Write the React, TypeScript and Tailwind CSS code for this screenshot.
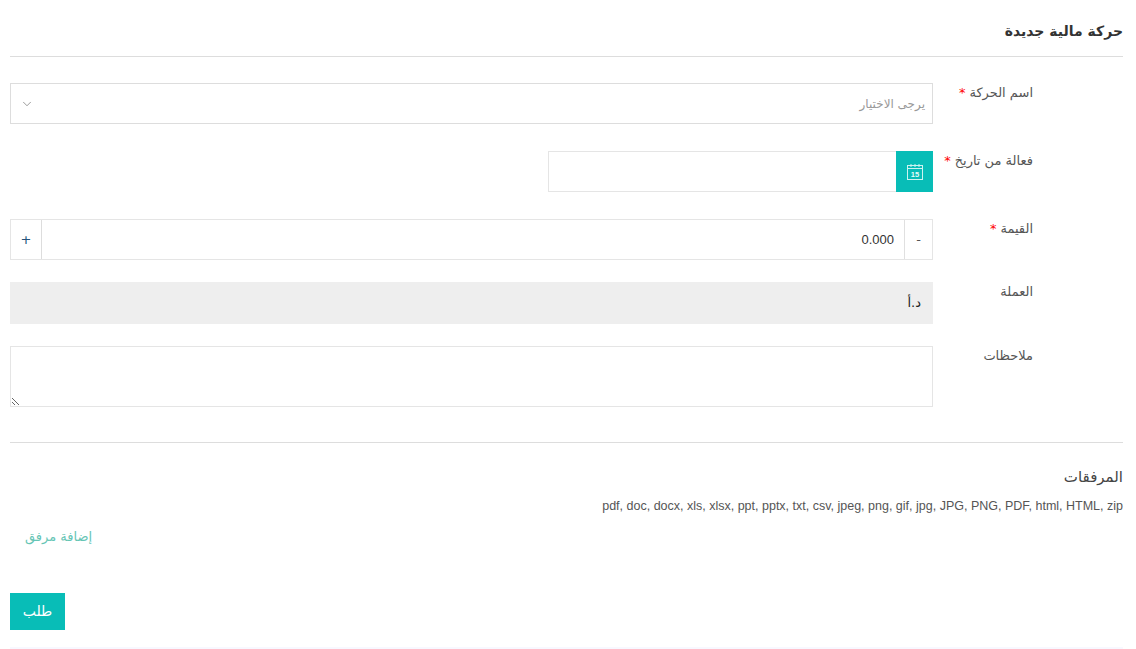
import { ChevronDown } from "lucide-react";

const arabicFont = "[font-family:'DejaVu_Sans','Noto_Sans',sans-serif]";

const labelCls = "w-[190px] shrink-0 text-left text-[13px] leading-5 text-[#555]";
const labelWrap = "flex w-[190px] shrink-0 justify-start pr-[0px]";

function Label({ text, required }: { text: string; required?: boolean }) {
  return (
    <div className={labelWrap}>
      <div className={`${labelCls} pr-[90px]`}>
        <span dir="rtl" className="block w-fit">
          {text}
          {required && <span className="mr-1 text-[#f00]">*</span>}
        </span>
      </div>
    </div>
  );
}

function CalendarIcon() {
  return (
    <svg width="16" height="16" viewBox="0 0 16 16" fill="none" stroke="#cdf3f0" strokeWidth="1">
      <rect x="0.5" y="1.5" width="15" height="14" />
      <line x1="0.5" y1="4.5" x2="15.5" y2="4.5" />
      <line x1="4" y1="0" x2="4" y2="3" />
      <line x1="8" y1="0" x2="8" y2="3" />
      <line x1="12" y1="0" x2="12" y2="3" />
      <text x="8" y="13" textAnchor="middle" fontSize="7.5" fontWeight="700" fill="#e6fbf9" stroke="none" fontFamily="Liberation Sans">
        15
      </text>
    </svg>
  );
}

export default function App() {
  return (
    <div dir="rtl" className={`h-[649px] w-[1136px] overflow-hidden bg-white pl-[10px] pr-[13px] ${arabicFont}`}>
      <div className="h-[647px]">
        <h2 className="h-[57px] border-b border-[#ddd] pt-[21px] text-[14px] font-bold leading-5 text-[#333]">حركة مالية جديدة</h2>

        <div className="mt-[26px] flex h-[41px]">
          <Label text="اسم الحركة" required />
          <div className="flex h-[41px] w-[923px] items-center justify-between border border-[#ddd] pl-[9px] pr-[7px] text-[12px] text-[#999]">
            <span>يرجى الاختيار</span>
            <ChevronDown size={14} strokeWidth={1} className="text-[#555]" />
          </div>
        </div>

        <div className="mt-[27px] flex h-[41px]">
          <Label text="فعالة من تاريخ" required />
          <div className="flex h-[41px] w-[385px]">
            <div className="flex w-[37px] items-center justify-center bg-[#08bdb7]">
              <CalendarIcon />
            </div>
            <div className="flex-1 border border-r-0 border-[#e5e5e5]" />
          </div>
        </div>

        <div className="mt-[27px] flex h-[41px]">
          <Label text="القيمة" required />
          <div className="flex h-[41px] w-[923px] border border-[#e5e5e5] text-[#555]">
            <div className="flex w-[28px] shrink-0 items-center justify-center border-l border-[#e0e0e0] text-[13px]">-</div>
            <div dir="ltr" className="flex-1 pr-[10px] text-right text-[13px] leading-[39px] text-[#333] [font-family:'Liberation_Sans',sans-serif]">0.000</div>
            <div className="flex w-[31px] shrink-0 items-center justify-center border-r border-[#ddd] text-[13px] text-[#24527a]">+</div>
          </div>
        </div>

        <div className="mt-[22px] flex h-[42px]">
          <Label text="العملة" />
          <div className="flex h-[42px] w-[923px] items-center bg-[#eee] pr-[12px] text-[13px] text-[#222]">د.أ</div>
        </div>

        <div className="mt-[22px] flex h-[61px]">
          <Label text="ملاحظات" />
          <textarea className="h-[61px] w-[923px] border border-[#e5e5e5] bg-white outline-none" />
        </div>

        <div className="mt-[35px] border-t border-[#ddd] pt-[24px]">
          <div className="text-[15px] leading-5 text-[#444]">المرفقات</div>
          <div dir="ltr" className="mt-[10px] text-right text-[12.5px] leading-[18px] text-[#555] [font-family:'Liberation_Sans',sans-serif]">
            pdf, doc, docx, xls, xlsx, ppt, pptx, txt, csv, jpeg, png, gif, jpg, JPG, PNG, PDF, html, HTML, zip
          </div>
          <div className="mt-[12px] flex justify-end pl-[15px] text-[13px] leading-5 text-[#66c5b5]">إضافة مرفق</div>
          <div className="mt-[46px] flex justify-end">
            <button type="button" className="h-[37px] w-[55px] bg-[#08bdb7] text-[14px] text-white">طلب</button>
          </div>
        </div>
      </div>
      <div className="h-[2px] bg-[#f8f8ff]" />
    </div>
  );
}
